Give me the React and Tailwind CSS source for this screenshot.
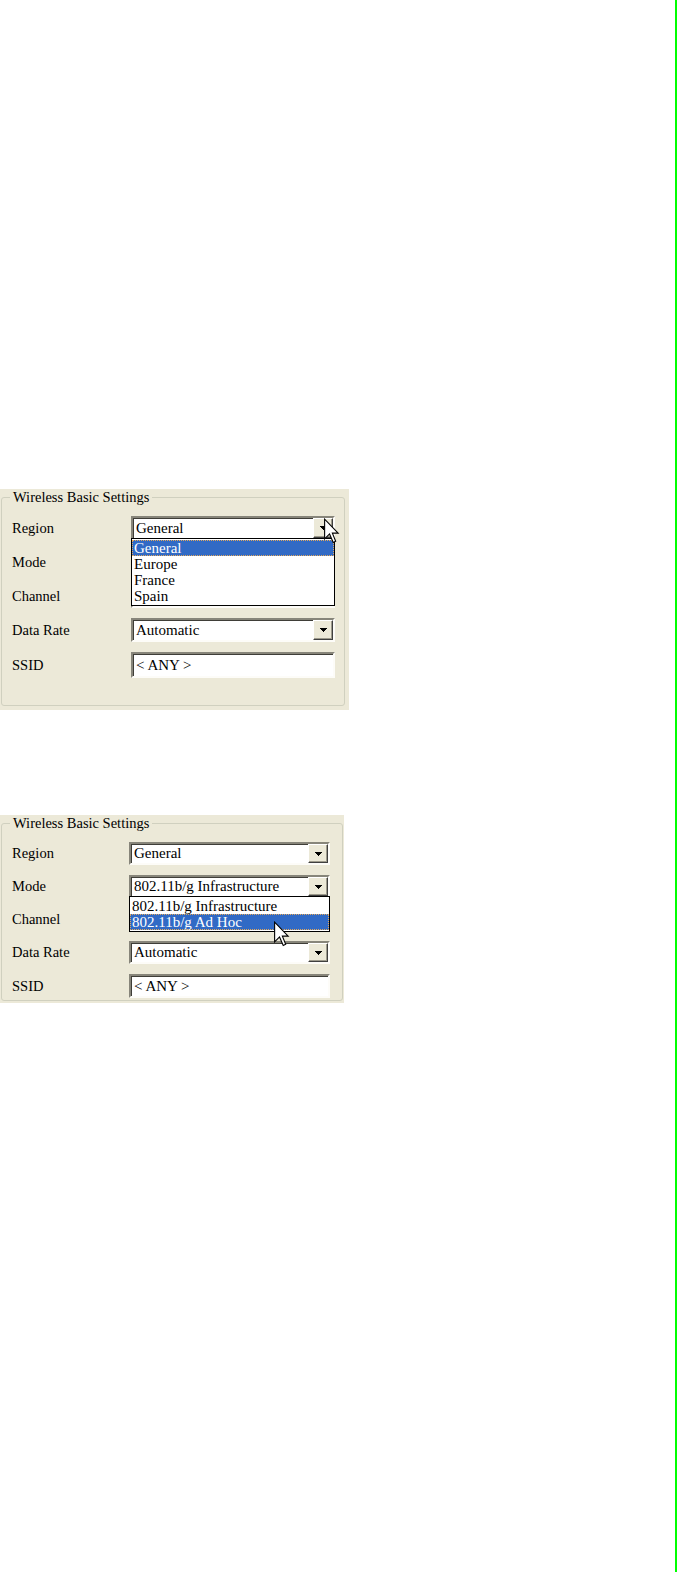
import React from 'react'

const serif = "font-['Liberation_Serif','Times_New_Roman',serif]"

// small black combo arrow, drawn pixel by pixel like the XP one
const ComboArrow = () => (
    <svg width="7" height="4" viewBox="0 0 7 4" shapeRendering="crispEdges">
        <rect x="0" y="0" width="7" height="1" fill="#000" />
        <rect x="1" y="1" width="5" height="1" fill="#000" />
        <rect x="2" y="2" width="3" height="1" fill="#000" />
        <rect x="3" y="3" width="1" height="1" fill="#000" />
    </svg>
)

// windows pointer
const Pointer = ({ className }) => (
    <svg className={className} width="16" height="27" viewBox="0 0 13 21">
        <path d="M0.5 0.5 V16.5 L4.5 12.5 L7.5 19.5 L9.5 18.5 L6.8 11.8 H11.5 Z" fill="#fff" stroke="#000" strokeWidth="0.9" strokeLinejoin="miter" />
    </svg>
)

function Combo({ value, className = '', children }) {
    return (
        <div className={`relative flex items-center bg-white border-2 border-t-[#87857a] border-l-[#87857a] border-b-[#fdfcf8] border-r-[#fdfcf8] shadow-[inset_1px_1px_0_#3f3e38] ${className}`}>
            <span className="flex-1 pl-[3px] text-[15px] leading-none text-black whitespace-nowrap">{value}</span>
            <div className="flex items-center justify-center w-[20px] h-full bg-[#ece9d8] border border-t-[#fff] border-l-[#fff] border-b-[#404040] border-r-[#404040] shadow-[inset_-1px_-1px_0_#9d9a8c]">
                <ComboArrow />
            </div>
            {children}
        </div>
    )
}

function TextBox({ value, className = '' }) {
    return (
        <div className={`flex items-center bg-white border-2 border-t-[#87857a] border-l-[#87857a] border-b-[#fdfcf8] border-r-[#fdfcf8] shadow-[inset_1px_1px_0_#3f3e38] ${className}`}>
            <span className="pl-[3px] text-[15px] leading-none text-black">{value}</span>
        </div>
    )
}

function DropList({ items, selected, children }) {
    return (
        <div className="absolute top-full -left-[2px] -right-[2px] z-10 bg-white border border-black py-[1px]">
            {items.map((item) => (
                <div
                    key={item}
                    className={`relative h-[16px] flex items-center px-[2px] text-[15px] leading-none whitespace-nowrap ${item === selected
                        ? 'bg-[#316ac5] text-white outline outline-1 outline-dotted outline-[#e2a85c] -outline-offset-1'
                        : 'text-black'
                        }`}
                >
                    {item}
                    {item === selected && children}
                </div>
            ))}
        </div>
    )
}

function Row({ label, labelW, children }) {
    return (
        <div className="flex items-center">
            <span className={`${labelW} pl-[10px] text-[14.5px] leading-none text-black`}>{label}</span>
            {children}
        </div>
    )
}

export default function App() {
    return (
        <div className={`flex w-[677px] h-[1572px] bg-white ${serif}`}>
            <main className="flex-1 flex flex-col pt-[489px]">
                {/* first capture: region list open */}
                <section className="w-[349px] h-[221px] bg-[#ece9d8] pl-[1px] pr-[4px] pb-[4px]">
                    <fieldset className="h-full border border-[#d0d0bf] rounded-[3px] pt-[11px]">
                        <legend className="ml-[8px] px-[3px] text-[14.5px] leading-[16px] text-black">Wireless Basic Settings</legend>
                        <div className="flex flex-col gap-[10px]">
                            <Row label="Region" labelW="w-[129px]">
                                <Combo value="General" className="w-[204px] h-[24px]">
                                    <DropList items={['General', 'Europe', 'France', 'Spain']} selected="General" />
                                    <Pointer className="absolute left-[191px] top-[0px] z-20" />
                                </Combo>
                            </Row>
                            {/* these two sit under the open list */}
                            <Row label="Mode" labelW="w-[129px]">
                                <Combo value="" className="w-[204px] h-[24px]" />
                            </Row>
                            <Row label="Channel" labelW="w-[129px]">
                                <Combo value="" className="w-[204px] h-[24px]" />
                            </Row>
                            <Row label="Data Rate" labelW="w-[129px]">
                                <Combo value="Automatic" className="w-[204px] h-[24px]" />
                            </Row>
                            <Row label="SSID" labelW="w-[129px]">
                                <TextBox value="< ANY >" className="w-[204px] h-[26px]" />
                            </Row>
                        </div>
                    </fieldset>
                </section>

                {/* second capture: mode list open */}
                <section className="mt-[105px] w-[344px] h-[188px] bg-[#ece9d8] pl-[1px] pr-[1px] pb-[2px]">
                    <fieldset className="h-full border border-[#d0d0bf] rounded-[3px] pt-[11px]">
                        <legend className="ml-[8px] px-[3px] text-[14.5px] leading-[16px] text-black">Wireless Basic Settings</legend>
                        <div className="flex flex-col gap-[10px]">
                            <Row label="Region" labelW="w-[127px]">
                                <Combo value="General" className="w-[201px] h-[23px]" />
                            </Row>
                            <Row label="Mode" labelW="w-[127px]">
                                <Combo value="802.11b/g Infrastructure" className="w-[201px] h-[23px]">
                                    <DropList items={['802.11b/g Infrastructure', '802.11b/g Ad Hoc']} selected="802.11b/g Ad Hoc">
                                        <Pointer className="absolute left-[144px] top-[7px] z-20" />
                                    </DropList>
                                </Combo>
                            </Row>
                            <Row label="Channel" labelW="w-[127px]">
                                <Combo value="" className="w-[201px] h-[23px]" />
                            </Row>
                            <Row label="Data Rate" labelW="w-[127px]">
                                <Combo value="Automatic" className="w-[201px] h-[23px]" />
                            </Row>
                            <Row label="SSID" labelW="w-[127px]">
                                <TextBox value="< ANY >" className="w-[201px] h-[24px]" />
                            </Row>
                        </div>
                    </fieldset>
                </section>
            </main>
            <div className="w-[2px] bg-[#00ff00]" />
        </div>
    )
}
